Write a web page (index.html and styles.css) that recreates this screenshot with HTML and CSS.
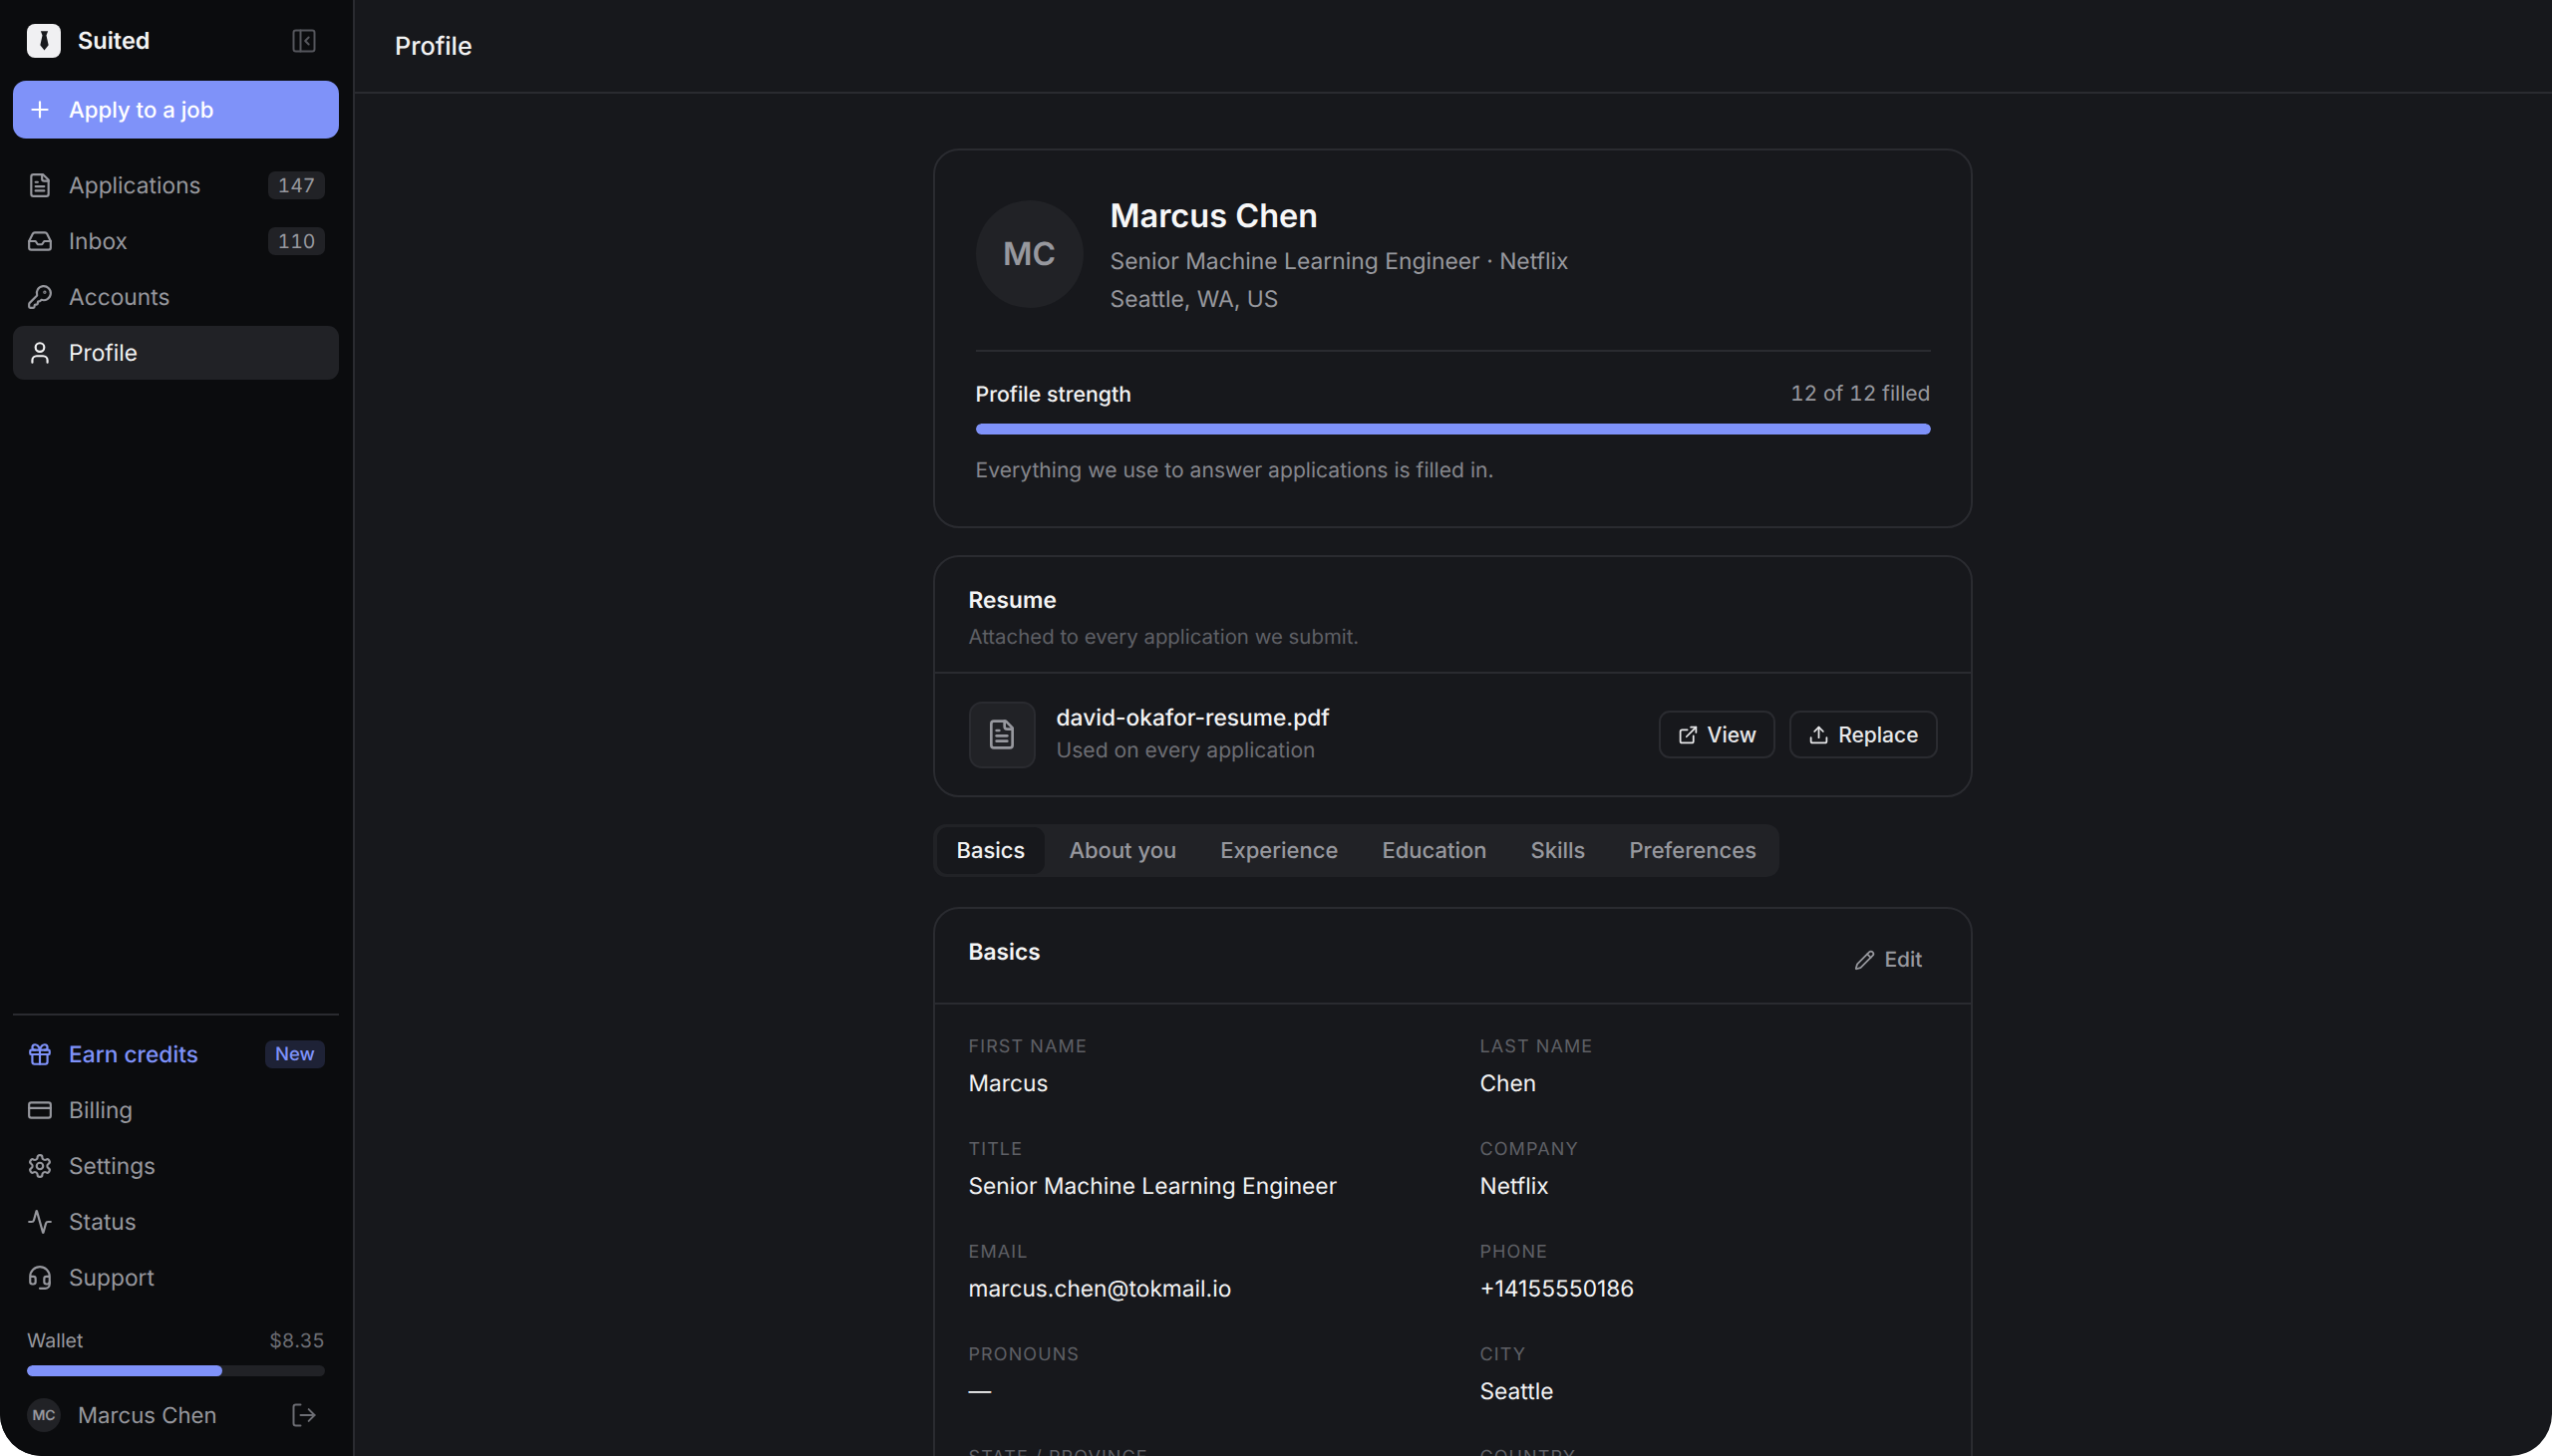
FILE: index.html
```html
<!DOCTYPE html>
<html lang="en">
<head>
<meta charset="utf-8">
<title>Profile</title>
<link rel="stylesheet" href="styles.css">
</head>
<body>
<svg class="defs" aria-hidden="true">
  <symbol id="i-file" viewBox="0 0 24 24"><path d="M15 2H6a2 2 0 0 0-2 2v16a2 2 0 0 0 2 2h12a2 2 0 0 0 2-2V7Z"/><path d="M14 2v4a2 2 0 0 0 2 2h4"/><path d="M10 9H8"/><path d="M16 13H8"/><path d="M16 17H8"/></symbol>
  <symbol id="i-inbox" viewBox="0 0 24 24"><polyline points="22 12 16 12 14 15 10 15 8 12 2 12"/><path d="M5.45 5.11 2 12v6a2 2 0 0 0 2 2h16a2 2 0 0 0 2-2v-6l-3.45-6.89A2 2 0 0 0 16.76 4H7.24a2 2 0 0 0-1.79 1.11z"/></symbol>
  <symbol id="i-key" viewBox="0 0 24 24"><path d="M2.586 17.414A2 2 0 0 0 2 18.828V21a1 1 0 0 0 1 1h3a1 1 0 0 0 1-1v-1a1 1 0 0 1 1-1h1a1 1 0 0 0 1-1v-1a1 1 0 0 1 1-1h.172a2 2 0 0 0 1.414-.586l.814-.814a6.5 6.5 0 1 0-4-4z"/><circle cx="16.5" cy="7.5" r=".5"/></symbol>
  <symbol id="i-user" viewBox="0 0 24 24"><path d="M19 21v-2a4 4 0 0 0-4-4H9a4 4 0 0 0-4 4v2"/><circle cx="12" cy="7" r="4"/></symbol>
  <symbol id="i-gift" viewBox="0 0 24 24"><rect x="3" y="8" width="18" height="4" rx="1"/><path d="M12 8v13"/><path d="M19 12v7a2 2 0 0 1-2 2H7a2 2 0 0 1-2-2v-7"/><path d="M7.5 8a2.5 2.5 0 0 1 0-5A4.8 8 0 0 1 12 8a4.8 8 0 0 1 4.5-5 2.5 2.5 0 0 1 0 5"/></symbol>
  <symbol id="i-card" viewBox="0 0 24 24"><rect x="2" y="5" width="20" height="14" rx="2"/><line x1="2" y1="10" x2="22" y2="10"/></symbol>
  <symbol id="i-gear" viewBox="0 0 24 24"><path d="M12.22 2h-.44a2 2 0 0 0-2 2v.18a2 2 0 0 1-1 1.73l-.43.25a2 2 0 0 1-2 0l-.15-.08a2 2 0 0 0-2.73.73l-.22.38a2 2 0 0 0 .73 2.73l.15.1a2 2 0 0 1 1 1.72v.51a2 2 0 0 1-1 1.74l-.15.09a2 2 0 0 0-.73 2.73l.22.38a2 2 0 0 0 2.73.73l.15-.08a2 2 0 0 1 2 0l.43.25a2 2 0 0 1 1 1.73V20a2 2 0 0 0 2 2h.44a2 2 0 0 0 2-2v-.18a2 2 0 0 1 1-1.73l.43-.25a2 2 0 0 1 2 0l.15.08a2 2 0 0 0 2.73-.73l.22-.39a2 2 0 0 0-.73-2.73l-.15-.08a2 2 0 0 1-1-1.74v-.5a2 2 0 0 1 1-1.74l.15-.09a2 2 0 0 0 .73-2.73l-.22-.38a2 2 0 0 0-2.73-.73l-.15.08a2 2 0 0 1-2 0l-.43-.25a2 2 0 0 1-1-1.73V4a2 2 0 0 0-2-2z"/><circle cx="12" cy="12" r="3"/></symbol>
  <symbol id="i-activity" viewBox="0 0 24 24"><path d="M22 12h-2.48a2 2 0 0 0-1.93 1.46l-2.35 8.36a.25.25 0 0 1-.48 0L9.24 2.18a.25.25 0 0 0-.48 0l-2.35 8.36A2 2 0 0 1 4.49 12H2"/></symbol>
  <symbol id="i-headset" viewBox="0 0 24 24"><path d="M3 11h3a2 2 0 0 1 2 2v3a2 2 0 0 1-2 2H5a2 2 0 0 1-2-2v-5Zm0 0a9 9 0 1 1 18 0m0 0v5a2 2 0 0 1-2 2h-1a2 2 0 0 1-2-2v-3a2 2 0 0 1 2-2h3Z"/><path d="M21 16v2a4 4 0 0 1-4 4h-5"/></symbol>
  <symbol id="i-logout" viewBox="0 0 24 24"><path d="M9 21H5a2 2 0 0 1-2-2V5a2 2 0 0 1 2-2h4"/><polyline points="16 17 21 12 16 7"/><line x1="21" y1="12" x2="9" y2="12"/></symbol>
  <symbol id="i-panel" viewBox="0 0 24 24"><rect x="3" y="3" width="18" height="18" rx="2"/><path d="M9 3v18"/><path d="m16 15-3-3 3-3"/></symbol>
  <symbol id="i-plus" viewBox="0 0 24 24"><path d="M5 12h14"/><path d="M12 5v14"/></symbol>
  <symbol id="i-ext" viewBox="0 0 24 24"><path d="M15 3h6v6"/><path d="M10 14 21 3"/><path d="M18 13v6a2 2 0 0 1-2 2H5a2 2 0 0 1-2-2V8a2 2 0 0 1 2-2h6"/></symbol>
  <symbol id="i-upload" viewBox="0 0 24 24"><path d="M21 15v4a2 2 0 0 1-2 2H5a2 2 0 0 1-2-2v-4"/><polyline points="17 8 12 3 7 8"/><line x1="12" y1="3" x2="12" y2="15"/></symbol>
  <symbol id="i-pencil" viewBox="0 0 24 24"><path d="M21.174 6.812a1 1 0 0 0-3.986-3.987L3.842 16.174a2 2 0 0 0-.5.83l-1.321 4.352a.5.5 0 0 0 .623.622l4.353-1.32a2 2 0 0 0 .83-.497z"/><path d="m15 5 4 4"/></symbol>
</svg>
<div class="app">
  <aside class="sidebar">
    <div class="brand">
      <span class="logo"><svg viewBox="0 0 24 24" class="tie"><path d="M8.5 3h7l-1.6 4.2 2.1 9.3L12 21.5 8 16.5l2.1-9.3z"/></svg></span>
      <span class="brand-name">Suited</span>
      <svg class="ic ic-muted ic-end"><use href="#i-panel"/></svg>
    </div>
    <a class="apply"><svg class="ic"><use href="#i-plus"/></svg>Apply to a job</a>
    <nav class="nav">
      <a class="item"><svg class="ic"><use href="#i-file"/></svg><span class="label">Applications</span><span class="badge">147</span></a>
      <a class="item"><svg class="ic"><use href="#i-inbox"/></svg><span class="label">Inbox</span><span class="badge">110</span></a>
      <a class="item"><svg class="ic"><use href="#i-key"/></svg><span class="label">Accounts</span></a>
      <a class="item active"><svg class="ic"><use href="#i-user"/></svg><span class="label">Profile</span></a>
    </nav>
    <div class="side-bottom">
      <nav class="nav nav-lower">
        <a class="item accent"><svg class="ic"><use href="#i-gift"/></svg><span class="label">Earn credits</span><span class="badge badge-new">New</span></a>
        <a class="item"><svg class="ic"><use href="#i-card"/></svg><span class="label">Billing</span></a>
        <a class="item"><svg class="ic"><use href="#i-gear"/></svg><span class="label">Settings</span></a>
        <a class="item"><svg class="ic"><use href="#i-activity"/></svg><span class="label">Status</span></a>
        <a class="item"><svg class="ic"><use href="#i-headset"/></svg><span class="label">Support</span></a>
      </nav>
      <div class="wallet">
        <div class="wallet-row"><span>Wallet</span><span class="wallet-amt">$8.35</span></div>
        <div class="wallet-track"><div class="wallet-fill" style="width:65.5%"></div></div>
      </div>
      <div class="userrow">
        <span class="mini-avatar">MC</span>
        <span class="user-name">Marcus Chen</span>
        <svg class="ic ic-muted2 ic-end"><use href="#i-logout"/></svg>
      </div>
    </div>
  </aside>
  <main class="main">
    <header class="topbar">Profile</header>
    <div class="content-wrap">
      <div class="content">
        <section class="card hero">
          <div class="hero-top">
            <div class="avatar">MC</div>
            <div class="hero-text">
              <h1 class="name">Marcus Chen</h1>
              <div class="sub">Senior Machine Learning Engineer · Netflix</div>
              <div class="sub">Seattle, WA, US</div>
            </div>
          </div>
          <div class="strength">
            <div class="strength-row"><span class="strength-title">Profile strength</span><span class="strength-count">12 of 12 filled</span></div>
            <div class="bar"><div class="bar-fill" style="width:100%"></div></div>
            <p class="strength-note">Everything we use to answer applications is filled in.</p>
          </div>
        </section>
        <section class="card resume">
          <div class="card-head">
            <h2 class="card-title">Resume</h2>
            <p class="card-sub">Attached to every application we submit.</p>
          </div>
          <div class="resume-body">
            <div class="doc"><svg class="ic ic-doc"><use href="#i-file"/></svg></div>
            <div class="doc-text">
              <div class="doc-name">david-okafor-resume.pdf</div>
              <div class="doc-sub">Used on every application</div>
            </div>
            <div class="actions">
              <button class="btn"><svg class="ic-s"><use href="#i-ext"/></svg>View</button>
              <button class="btn"><svg class="ic-s"><use href="#i-upload"/></svg>Replace</button>
            </div>
          </div>
        </section>
        <div class="tabs">
          <span class="tab tab-on">Basics</span>
          <span class="tab">About you</span>
          <span class="tab">Experience</span>
          <span class="tab">Education</span>
          <span class="tab">Skills</span>
          <span class="tab">Preferences</span>
        </div>
        <section class="card basics">
          <div class="basics-head">
            <h2 class="card-title">Basics</h2>
            <span class="edit"><svg class="ic-s"><use href="#i-pencil"/></svg>Edit</span>
          </div>
          <div class="fields">
            <div class="field"><div class="f-label">First name</div><div class="f-value">Marcus</div></div>
            <div class="field"><div class="f-label">Last name</div><div class="f-value">Chen</div></div>
            <div class="field"><div class="f-label">Title</div><div class="f-value">Senior Machine Learning Engineer</div></div>
            <div class="field"><div class="f-label">Company</div><div class="f-value">Netflix</div></div>
            <div class="field"><div class="f-label">Email</div><div class="f-value">marcus.chen@tokmail.io</div></div>
            <div class="field"><div class="f-label">Phone</div><div class="f-value">+14155550186</div></div>
            <div class="field"><div class="f-label">Pronouns</div><div class="f-value">—</div></div>
            <div class="field"><div class="f-label">City</div><div class="f-value">Seattle</div></div>
            <div class="field"><div class="f-label">State / Province</div><div class="f-value">WA</div></div>
            <div class="field"><div class="f-label">Country</div><div class="f-value">US</div></div>
          </div>
        </section>
      </div>
    </div>
  </main>
</div>
</body>
</html>
```

FILE: styles.css
```css
* { box-sizing: border-box; }
html, body { margin: 0; height: 100%; background: #fff; }
body { font-family: Inter, "Liberation Sans", sans-serif; color: #f2f2f3; overflow: hidden; text-rendering: geometricPrecision; }
.defs { display: none; }
h1, h2, p { margin: 0; }

.ic, .ic-s { fill: none; stroke: currentColor; stroke-width: 2; stroke-linecap: round; stroke-linejoin: round; flex: none; }
.ic { width: 26px; height: 26px; }
.ic-s { width: 21px; height: 21px; }
.ic-end { width: 28px; height: 28px; stroke-width: 1.7; }

.app { display: flex; height: 1461px; border-radius: 0 0 42px 42px; overflow: hidden; background: #17181c; }

.sidebar { width: 356px; flex: none; background: #0b0c0e; border-right: 2px solid #2a2b30; display: flex; flex-direction: column; padding: 0 14px 0 13px; }
.brand { height: 81px; display: flex; align-items: center; padding: 0 21px 0 14px; }
.logo { width: 34px; height: 34px; border-radius: 8px; background: #f0f0f2; display: flex; align-items: center; justify-content: center; flex: none; }
.tie { width: 25px; height: 25px; fill: #18191d; }
.brand-name { margin-left: 17px; font-size: 23.5px; font-weight: 600; flex: 1; color: #f4f4f5; }
.ic-muted { color: #55565c; }
.apply { height: 58px; border-radius: 13px; background: #7f92f9; color: #fff; display: flex; align-items: center; gap: 16px; padding: 0 14px; font-size: 22.2px; font-weight: 500; }

.nav { display: flex; flex-direction: column; gap: 2px; margin-top: 20px; }
.item { height: 54px; border-radius: 11px; display: flex; align-items: center; gap: 16px; padding: 0 14px; font-size: 22.75px; color: #97989e; }
.label { flex: 1; }
.active { background: #212226; color: #f2f2f3; }
.accent { color: #7f92f9; font-weight: 450; }
.badge { min-width: 57px; height: 28px; border-radius: 7px; background: #212226; color: #97989e; font-size: 19.5px; font-weight: 400; display: flex; align-items: center; justify-content: center; font-variant-numeric: tabular-nums; }
.badge-new { min-width: 60px; background: #1e2236; color: #7f92f9; font-size: 18.5px; font-weight: 500; }

.side-bottom { margin-top: auto; }
.nav-lower { margin-top: 0; border-top: 2px solid #2a2b30; padding-top: 12px; }
.wallet { padding: 0 14px; margin-top: 24px; }
.wallet-row { display: flex; justify-content: space-between; font-size: 19.5px; color: #97989e; }
.wallet-amt { color: #6c6d73; font-variant-numeric: tabular-nums; }
.wallet-track { height: 11px; border-radius: 6px; background: #212226; margin-top: 13px; overflow: hidden; }
.wallet-fill { height: 100%; background: #7f92f9; border-radius: 6px; }
.userrow { height: 80px; display: flex; align-items: center; padding: 0 21px 2px 14px; }
.mini-avatar { width: 34px; height: 34px; border-radius: 50%; background: #212226; color: #97989e; font-size: 14px; font-weight: 600; display: flex; align-items: center; justify-content: center; flex: none; }
.user-name { margin-left: 17px; flex: 1; font-size: 22.2px; color: #97989e; }
.ic-muted2 { color: #6c6d73; }

.main { flex: 1; min-width: 0; display: flex; flex-direction: column; overflow: hidden; }
.topbar { height: 94px; flex: none; border-bottom: 2px solid #2a2b30; display: flex; align-items: center; padding: 2px 40px 0; font-size: 25.2px; font-weight: 500; }
.content-wrap { padding-right: 2px; }
.content { width: 1043px; margin: 0 auto; padding-top: 55px; display: flex; flex-direction: column; }

.card { border: 2px solid #2a2b30; border-radius: 26px; background: #17181c; }
.hero { height: 381px; padding: 50px 40px 0 41px; }
.hero-top { display: flex; gap: 27px; height: 152px; border-bottom: 2px solid #2a2b30; }
.avatar { width: 108px; height: 108px; border-radius: 50%; background: #212226; color: #97989e; font-size: 32px; font-weight: 600; display: flex; align-items: center; justify-content: center; flex: none; padding-bottom: 2px; }
.name { font-size: 32.5px; font-weight: 600; line-height: 40px; margin-top: -4px; color: #f7f7f8; }
.sub { font-size: 22.85px; line-height: 38px; color: #97989e; }
.name + .sub { margin-top: 6px; }
.strength { padding-top: 28px; }
.strength-row { display: flex; justify-content: space-between; font-size: 21.125px; line-height: 30px; }
.strength-title { font-weight: 500; font-size: 21.3px; }
.strength-count { color: #97989e; font-variant-numeric: tabular-nums; }
.bar { height: 11px; border-radius: 6px; background: #212226; margin-top: 14px; overflow: hidden; }
.bar-fill { height: 100%; background: #7f92f9; border-radius: 6px; }
.strength-note { font-size: 21.125px; line-height: 30px; color: #85868c; margin-top: 22px; }

.resume { height: 243px; margin-top: 27px; }
.card-head { height: 117px; border-bottom: 2px solid #2a2b30; padding: 29px 34px 0; }
.card-title { font-size: 22.75px; font-weight: 600; line-height: 30px; color: #f4f4f5; }
.card-sub { font-size: 20.4px; line-height: 30px; color: #5f6066; margin-top: 6px; }
.resume-body { display: flex; align-items: center; height: 122px; padding: 0 34px; }
.doc { width: 67px; height: 67px; border-radius: 13px; background: #212226; border: 2px solid #2a2b30; display: flex; align-items: center; justify-content: center; color: #97989e; flex: none; }
.ic-doc { width: 32px; height: 32px; }
.doc-text { margin-left: 21px; flex: 1; }
.doc-name { font-size: 22.75px; font-weight: 500; line-height: 32px; }
.doc-sub { font-size: 21.125px; line-height: 30px; color: #6c6d73; margin-top: 2px; }
.actions { display: flex; gap: 14px; margin-right: -1px; }
.btn { height: 48px; border: 2px solid #2a2b30; border-radius: 11px; background: transparent; color: #e8e8ea; font: 500 21px Inter, "Liberation Sans", sans-serif; display: flex; align-items: center; gap: 9px; padding: 0 17px; }

.tabs { align-self: flex-start; margin-top: 27px; height: 53px; border-radius: 13px; background: #212226; display: flex; align-items: center; padding: 3px 3px 3px 4px; }
.tab { height: 47px; padding: 0 20px; border-radius: 11px; display: flex; align-items: center; font-size: 22px; font-weight: 500; color: #97989e; margin-right: 4px; white-space: nowrap; }
.tab:last-child { margin-right: 0; }
.tab-on { background: #17181c; color: #f2f2f3; }

.basics { margin-top: 30px; border-bottom-left-radius: 0; border-bottom-right-radius: 0; }
.basics-head { height: 96px; border-bottom: 2px solid #2a2b30; display: flex; justify-content: space-between; padding: 29px 34px 0; }
.edit { height: 48px; margin-top: -2px; display: flex; align-items: center; gap: 9px; color: #97989e; font-size: 21px; font-weight: 500; padding-right: 14px; }
.fields { display: grid; grid-template-columns: 513px 1fr; padding: 30px 34px 0; row-gap: 36px; }
.f-label { font-size: 18px; line-height: 26px; letter-spacing: 1.1px; text-transform: uppercase; color: #5f6066; }
.f-value { font-size: 22.75px; line-height: 34px; margin-top: 7px; color: #f2f2f3; }
```
